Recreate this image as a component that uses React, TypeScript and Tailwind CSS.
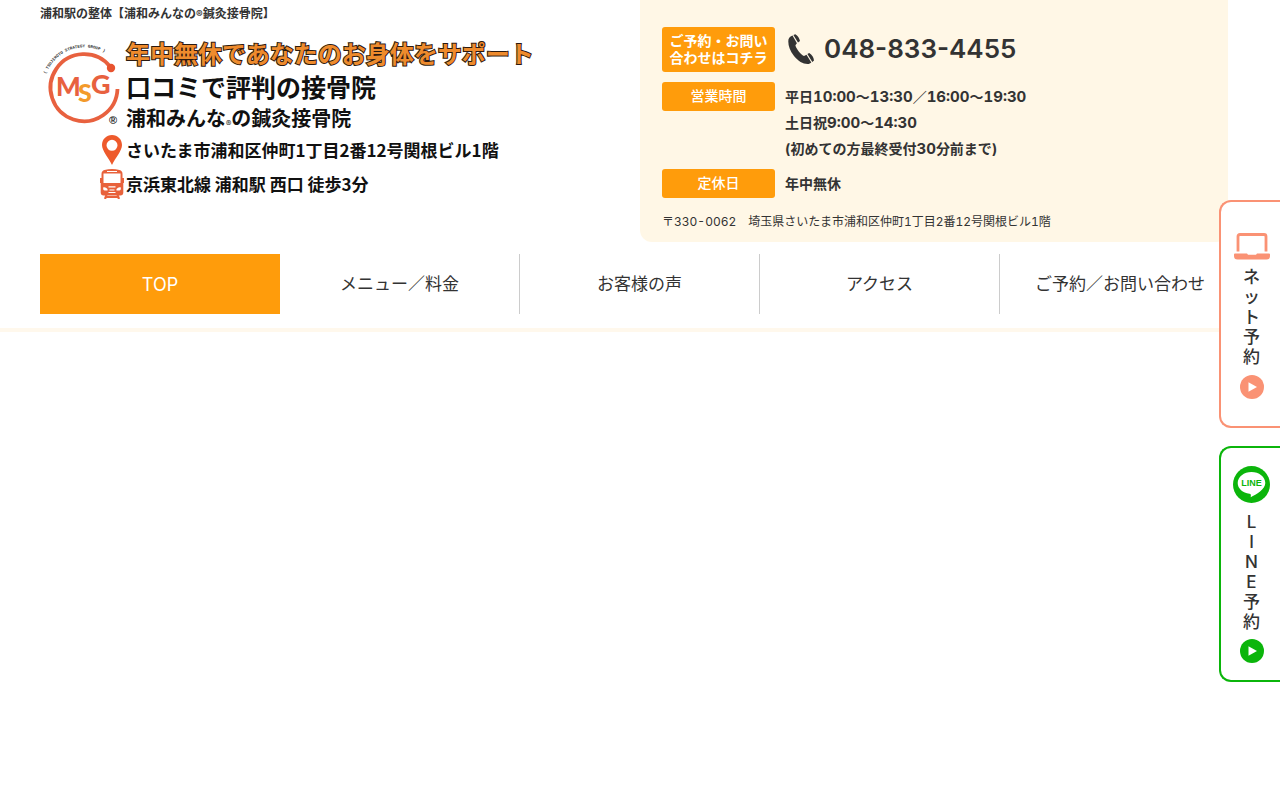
import { ReactNode } from "react";

const NAV_ITEMS = [
  { label: "TOP", href: "#top" },
  { label: "メニュー／料金", href: "#menu" },
  { label: "お客様の声", href: "#voice" },
  { label: "アクセス", href: "#access" },
  { label: "ご予約／お問い合わせ", href: "#contact" },
];

function GroupLogo() {
  return (
    <svg className="h-[90px] w-[86px] shrink-0" viewBox="40 37 86 90" role="img" aria-label="MSG">
      <defs>
        <path id="logo-arc" d="M46 74 A41 41 0 0 1 112 58" />
      </defs>
      <text fontSize="4.200" fill="#333" fontFamily="Liberation Mono, monospace">
        <textPath href="#logo-arc">( TSUJIMOTO STRATEGY GROUP )</textPath>
      </text>
      <path d="M117.500 89 A33.500 33.500 0 1 1 110 66.500" fill="none" stroke="#e8613f" strokeWidth="3.800" />
      <circle cx="111" cy="68" r="4.200" fill="#e8532f" />
      <g fontFamily="Lato, sans-serif" fontWeight="900">
        <text x="56" y="96" fontSize="26" fill="#e8613f">M</text>
        <text x="91" y="94" fontSize="27" fill="#e8613f">G</text>
        <text x="78" y="102" fontSize="25" fill="#f39a2b">S</text>
      </g>
      <text x="109" y="124" fontSize="11" fill="#222" fontFamily="Liberation Sans, sans-serif">®</text>
    </svg>
  );
}

function PinIcon() {
  return (
    <svg className="h-[30px] w-5" viewBox="0 0 20 30" aria-hidden="true">
      <path
        fill="#ee5a2c"
        fillRule="evenodd"
        d="M10 0C4.300 0 0 4.400 0 10c0 6 6.500 12.500 10 20 3.500-7.500 10-14 10-20C20 4.400 15.700 0 10 0Zm0 4.800a5.500 5.500 0 1 1 0 11 5.500 5.500 0 0 1 0-11Z"
      />
    </svg>
  );
}

function TrainIcon() {
  return (
    <svg className="h-[30px] w-6" viewBox="0 0 24 30" aria-hidden="true">
      <path fill="#e8623c" d="M4.500 1Q12-.8 19.500 1 22.500 1.800 22.500 5v4H24v5h-.7v9.500q0 3-3 3H3.700q-3 0-3-3V14H0V9h1.500V5q0-3.200 3-4Z" />
      <path fill="#fff" d="M3.500 4.500h17v9.500h-17zM7 2h10v.9H7z" />
      <path fill="#fff" d="M3 18.500q2.500-1 4.500 1.500v1.500H4.500Q3 21 3 18.500ZM21 18.500q-2.500-1-4.500 1.500v1.500h3Q21 21 21 18.500ZM8.500 17.300h7v1.200h-7zM9.500 20.500h5v1h-5zM8.500 23h7v1h-7z" />
      <path stroke="#e8623c" strokeWidth="2.200" d="M6.500 26 5 30M17.500 26l1.500 4M6 28h12" />
    </svg>
  );
}

function PhoneIcon() {
  return (
    <svg className="h-[30px] w-[26px] shrink-0" viewBox="0 0 26 30" fill="#333" aria-hidden="true">
      <path d="M4.500 1.600C1.500 2.500.3 4.500.3 7.500.3 12 2 17 6 22c4 5 9 8 13.500 8 1.800 0 3-.6 3.800-1.500L18.500 20.700 16 22c-2.500-.8-8-7-8.600-10.700L8.900 9.200Z" />
      <path d="M5.400 1 7.300.2Q11 2.500 12 7L10 8.600ZM19.400 20.100 21.200 19Q25.500 21.500 26 26.500l-1.700 1.600Z" />
    </svg>
  );
}

function LaptopIcon() {
  return (
    <svg className="h-[27px] w-9" viewBox="0 0 36 27" aria-hidden="true">
      <path d="M4 18.500V3.500Q4 1.500 6 1.500h24q2 0 2 2v15" fill="none" stroke="#fa9274" strokeWidth="2.800" />
      <path fill="#fa9274" d="M1 20.500h12l1 1.200h8l1-1.200h12q1 0 1 1V23q0 3.500-3.500 3.500h-29Q0 26.500 0 23v-1.500q0-1 1-1Z" />
    </svg>
  );
}

function LineIcon() {
  return (
    <svg className="h-[37px] w-[37px]" viewBox="0 0 37 37" aria-hidden="true">
      <circle cx="18.500" cy="18.500" r="18.500" fill="#0bb50b" />
      <path fill="#fff" d="M18.500 6c-7.500 0-13.800 4.800-13.800 11 0 5.500 5 10 11.800 10.800 1.600.3 1.500 1 1.200 3.400 5.500-2.800 14.600-7.900 14.600-14.200 0-6.200-6.300-11-13.800-11Z" />
      <text x="18.500" y="20" textAnchor="middle" fontSize="9" fontWeight="700" fill="#0bb50b" fontFamily="Liberation Sans, sans-serif">
        LINE
      </text>
    </svg>
  );
}

function PlayIcon({ color }: { color: string }) {
  return (
    <svg className="h-6 w-6" viewBox="0 0 24 24" aria-hidden="true">
      <circle cx="12" cy="12" r="12" fill={color} />
      <path d="M8.500 7.300v9.400l8.500-4.700z" fill="#fff" />
    </svg>
  );
}

// One upright character per line
function VerticalText({ text }: { text: string }) {
  return (
    <span className="flex flex-col items-center">
      {[...text].map((char, i) => (
        <span key={i}>{char}</span>
      ))}
    </span>
  );
}

function Num({ children }: { children: ReactNode }) {
  return <span className="text-[15px]">{children}</span>;
}

function InfoLabel({ children }: { children: ReactNode }) {
  return (
    <dt className="h-[29px] rounded-[3px] bg-[#ff9c0b] text-center text-sm leading-7 font-medium text-white">
      {children}
    </dt>
  );
}

function HeaderBrand() {
  return (
    <div className="w-1/2">
      <h1 className="pt-[5px] text-xs leading-[18px] font-bold">
        浦和駅の整体【浦和みんなの<span className="text-[10px]">®</span>鍼灸接骨院】
      </h1>
      <a href="#top" className="mt-3.5 block font-['Noto_Sans_CJK_JP',sans-serif] font-bold whitespace-nowrap text-[#111]">
        <span className="flex">
          <GroupLogo />
          <span className="flex flex-col">
            <span className="text-2xl leading-8 text-[#ee8b2d] [paint-order:stroke_fill] [-webkit-text-stroke:2px_#2b1a10]">
              年中無休であなたのお身体をサポート
            </span>
            <span className="text-[25px] leading-[34px]">口コミで評判の接骨院</span>
            <span className="text-xl leading-[30px]">
              浦和みんな<sub className="text-[11px] font-normal">®</sub>の鍼灸接骨院
            </span>
          </span>
        </span>
        <span className="flex items-center text-[17px] leading-[34px]">
          <span className="flex w-[86px] justify-end pr-1">
            <PinIcon />
          </span>
          さいたま市浦和区仲町1丁目2番12号関根ビル1階
        </span>
        <span className="flex items-center text-[17px] leading-[34px]">
          <span className="flex w-[86px] justify-end pr-0.5">
            <TrainIcon />
          </span>
          京浜東北線 浦和駅 西口 徒歩3分
        </span>
      </a>
    </div>
  );
}

function HeaderInfo() {
  return (
    <div className="w-[49%] rounded-b-xl bg-[#fff7e6] px-[22px] pt-[27px] pb-2.5">
      <div className="flex items-center">
        <a
          href="#contact"
          className="flex h-[45px] w-[113px] items-center justify-center rounded-[3px] bg-[#ff9c0b] pb-0.5 text-center text-sm leading-[17px] font-bold text-white"
        >
          ご予約・お問い
          <br />
          合わせはコチラ
        </a>
        <a href="tel:048-833-4455" className="ml-[13px] flex items-center gap-2.5 pb-0.5 text-[26px] leading-8 font-semibold">
          <PhoneIcon />
          048-833-4455
        </a>
      </div>
      <dl className="mt-2.5 grid grid-cols-[113px_1fr] gap-x-2.5 gap-y-[7px] text-sm leading-[26px] font-bold tabular-nums">
        <InfoLabel>営業時間</InfoLabel>
        <dd className="pt-0.5">
          平日<Num>10:00</Num>〜<Num>13:30</Num>／<Num>16:00</Num>〜<Num>19:30</Num>
          <br />
          土日祝<Num>9:00</Num>〜<Num>14:30</Num>
          <br />
          (初めての方最終受付<Num>30</Num>分前まで)
        </dd>
        <InfoLabel>定休日</InfoLabel>
        <dd className="pt-0.5">年中無休</dd>
      </dl>
      <p className="mt-3.5 text-xs leading-5 tabular-nums">
        〒330-0062　埼玉県さいたま市浦和区仲町1丁目2番12号関根ビル1階
      </p>
    </div>
  );
}

function SideTabs() {
  return (
    <div className="fixed top-[200px] right-0 flex flex-col gap-[18px] text-[17px] leading-5 font-medium">
      <a
        href="#reserve"
        className="flex w-[61px] flex-col items-center rounded-l-xl border-2 border-r-0 border-[#fa9274] bg-white pt-[31px] pb-[27px] pl-0.5"
      >
        <LaptopIcon />
        <span className="pt-[7px] pb-2">
          <VerticalText text="ネット予約" />
        </span>
        <PlayIcon color="#fa9274" />
      </a>
      <a
        href="#line"
        className="flex w-[61px] flex-col items-center rounded-l-xl border-2 border-r-0 border-[#0bb50b] bg-white pt-[18px] pb-[17px] pl-0.5"
      >
        <LineIcon />
        <span className="pt-[9px] pb-[7px]">
          <VerticalText text="LINE予約" />
        </span>
        <PlayIcon color="#0bb50b" />
      </a>
    </div>
  );
}

export default function App() {
  return (
    <div id="top" className="bg-white font-[Inter,'Noto_Sans_CJK_JP',sans-serif] text-[#333]" lang="ja">
      <header className="border-b-4 border-[#fff8ec] pb-[14px]">
        <div className="mx-auto max-w-[1200px]">
          <div className="flex items-start">
            <HeaderBrand />
            <HeaderInfo />
          </div>
          <nav className="mt-3">
            <ul className="grid grid-cols-5 text-[17px]">
              {NAV_ITEMS.map((item, i) => (
                <li key={item.href} className={i > 0 && i < 4 ? "border-r border-[#ccc]" : ""}>
                  <a
                    href={item.href}
                    className={`flex h-[60px] items-center justify-center pt-0.5 whitespace-nowrap ${
                      i === 0 ? "bg-[#ff9c0b] text-lg text-white" : ""
                    }`}
                  >
                    {item.label}
                  </a>
                </li>
              ))}
            </ul>
          </nav>
        </div>
      </header>
      <SideTabs />
    </div>
  );
}
